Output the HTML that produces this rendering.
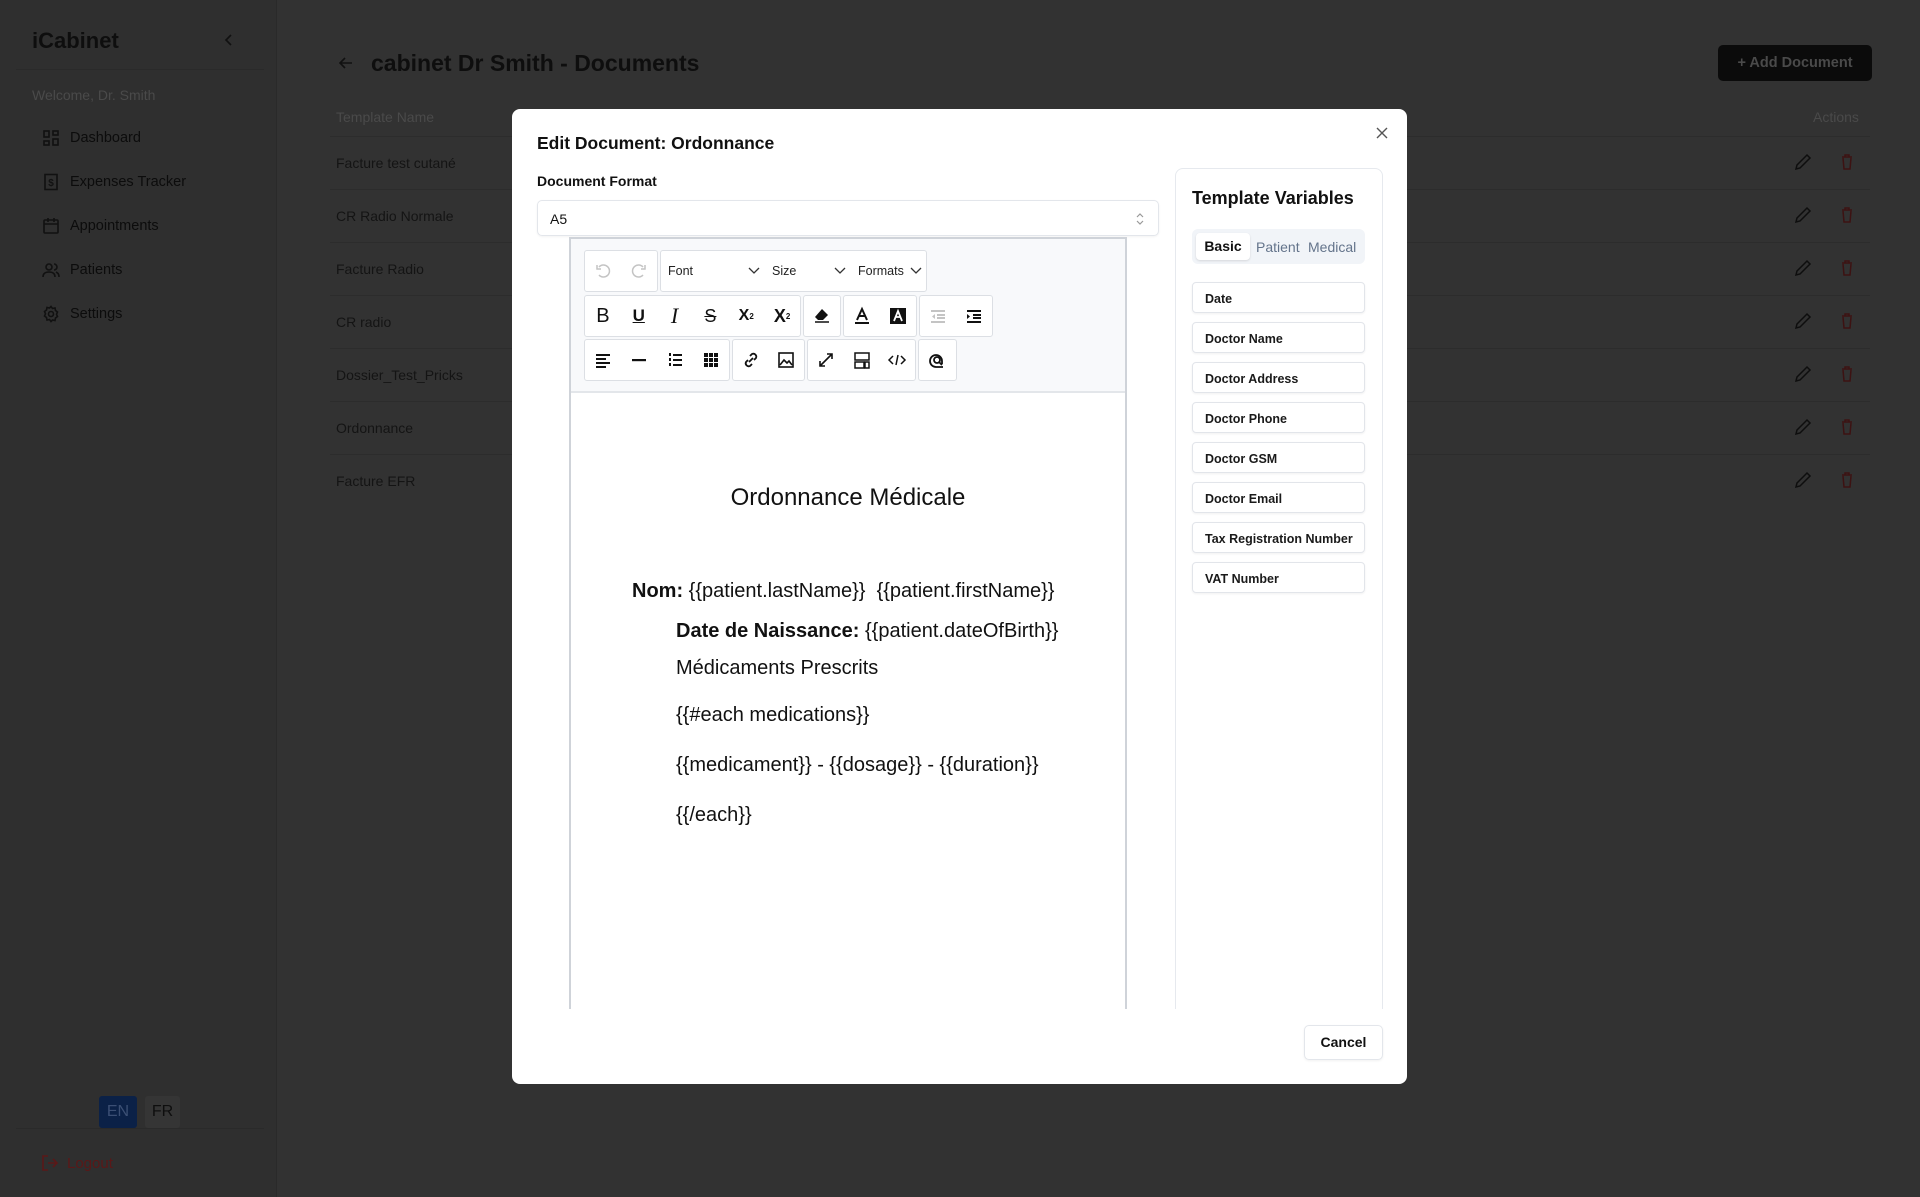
<!DOCTYPE html>
<html><head><meta charset="utf-8"><style>
*{box-sizing:border-box;margin:0;padding:0}
body{width:1920px;height:1197px;background:#323232;font-family:"Liberation Sans",sans-serif;position:relative;overflow:hidden;color:#0d0d0d}
.a{position:absolute}
.side{left:0;top:0;width:277px;height:1197px;background:#2f2f2f;border-right:1px solid #2a2a2a}
.nav{left:42px;font-size:14.5px;color:#0c0c0c;display:flex;align-items:center;gap:10px}
.nav svg{width:18px;height:18px}
.row{left:336px;font-size:14px;color:#141414}
.rl{left:330px;width:1540px;height:1px;background:#2c2c2c}
.modal{left:512px;top:109px;width:895px;height:975px;background:#fff;border-radius:8px}
.tb{background:#fff;border:1px solid #dcdfe4;border-radius:3px;height:42px;display:flex;align-items:center}
.b{width:36px;height:40px;display:flex;align-items:center;justify-content:center}
.b svg{width:20px;height:20px}
.var{left:1192px;width:173px;height:31px;border:1px solid #e2e5ea;border-radius:4px;box-shadow:0 1px 2px rgba(0,0,0,.06);font-size:12.5px;font-weight:bold;color:#1a1a1a;padding:9px 0 0 12px}
.ed{font-size:20px;color:#111}
</style></head><body>
<div class="a side"></div>
<div class="a" style="left:32px;top:28px;font-size:22px;font-weight:bold;color:#0e0e0e">iCabinet</div>
<svg class="a" style="left:223px;top:33px" width="12" height="14" viewBox="0 0 12 14"><path d="M8 2L3 7l5 5" stroke="#111" stroke-width="1.6" fill="none"/></svg>
<div class="a" style="left:16px;top:69px;width:248px;height:1px;background:#2a2a2a"></div>
<div class="a" style="left:32px;top:87px;font-size:14px;color:#4a4a4a">Welcome, Dr. Smith</div>
<div class="a nav" style="top:129px"><svg viewBox="0 0 18 18" fill="none" stroke="#111" stroke-width="1.6"><rect x="2" y="2" width="5" height="6"/><rect x="11" y="2" width="5" height="4"/><rect x="2" y="12" width="5" height="4"/><rect x="11" y="10" width="5" height="6"/></svg>Dashboard</div>
<div class="a nav" style="top:173px"><svg viewBox="0 0 18 18" fill="none" stroke="#111" stroke-width="1.6"><rect x="3" y="1.5" width="12" height="15"/><text x="9" y="13" font-size="10" text-anchor="middle" fill="#111" stroke="none" font-weight="bold">$</text></svg>Expenses Tracker</div>
<div class="a nav" style="top:217px"><svg viewBox="0 0 18 18" fill="none" stroke="#111" stroke-width="1.6"><rect x="2" y="3" width="14" height="13" rx="1"/><path d="M2 7h14M6 1v4M12 1v4"/></svg>Appointments</div>
<div class="a nav" style="top:261px"><svg viewBox="0 0 18 18" fill="none" stroke="#111" stroke-width="1.6"><circle cx="7" cy="6" r="3"/><path d="M1 16c0-4 3-5 6-5s6 1 6 5M12 3a3 3 0 010 6M14 11c2 1 3 2 3 5"/></svg>Patients</div>
<div class="a nav" style="top:305px"><svg viewBox="0 0 18 18" fill="none" stroke="#111" stroke-width="1.6"><circle cx="9" cy="9" r="2.5"/><path d="M9 1.5l1.5 2 2.5-.5.5 2.5 2 1.5-1 2.3 1 2.2-2 1.5-.5 2.5-2.5-.5L9 16.5l-1.5-2-2.5.5-.5-2.5-2-1.5 1-2.2-1-2.3 2-1.5.5-2.5 2.5.5z"/></svg>Settings</div>
<div class="a" style="left:99px;top:1096px;width:38px;height:32px;background:#0b2147;border-radius:3px;color:#3b4f74;font-size:16px;text-align:center;line-height:32px">EN</div>
<div class="a" style="left:145px;top:1096px;width:35px;height:32px;background:#353535;border-radius:3px;color:#0e0e0e;font-size:16px;text-align:center;line-height:32px">FR</div>
<div class="a" style="left:16px;top:1128px;width:248px;height:1px;background:#2a2a2a"></div>
<div class="a" style="left:41px;top:1154px;display:flex;gap:8px;align-items:center;font-size:15px;color:#5a1818"><svg width="18" height="18" viewBox="0 0 18 18" fill="none" stroke="#5a1818" stroke-width="1.6"><path d="M7 2H2v14h5M7 9h9M12 5l4 4-4 4"/></svg>Logout</div>

<svg class="a" style="left:338px;top:55px" width="16" height="16" viewBox="0 0 16 16" fill="none" stroke="#111" stroke-width="1.6"><path d="M14 8H2M7 3L2 8l5 5"/></svg>
<div class="a" style="left:371px;top:50px;font-size:23px;font-weight:bold;color:#0e0e0e">cabinet Dr Smith - Documents</div>
<div class="a" style="left:1718px;top:45px;width:154px;height:36px;background:#0b0b0b;border-radius:5px;color:#4a4a4a;font-size:14.5px;font-weight:bold;line-height:36px;text-align:center">+ Add Document</div>
<div class="a" style="left:336px;top:109px;font-size:14px;color:#4a4a4a">Template Name</div>
<div class="a" style="left:1813px;top:109px;font-size:14px;color:#4a4a4a">Actions</div>
<div class="a rl" style="top:136px"></div>
<div class="a row" style="top:155px">Facture test cutané</div>
<div class="a rl" style="top:189px"></div>
<div class="a row" style="top:208px">CR Radio Normale</div>
<div class="a rl" style="top:242px"></div>
<div class="a row" style="top:261px">Facture Radio</div>
<div class="a rl" style="top:295px"></div>
<div class="a row" style="top:314px">CR radio</div>
<div class="a rl" style="top:348px"></div>
<div class="a row" style="top:367px">Dossier_Test_Pricks</div>
<div class="a rl" style="top:401px"></div>
<div class="a row" style="top:420px">Ordonnance</div>
<div class="a rl" style="top:454px"></div>
<div class="a row" style="top:473px">Facture EFR</div>
<div class="a" style="left:1792px;top:153px;width:70px">
<svg width="70" height="350" viewBox="0 0 70 350" fill="none" stroke-width="1.5">
<g id="ic"><path d="M15 2l3 3-10 10-4 1 1-4z" stroke="#0e0e0e"/><path d="M50 4h10M53 4V2h4v2M51 5l1 11h6l1-11" stroke="#3d1212"/></g>
<use href="#ic" y="53"/><use href="#ic" y="106"/><use href="#ic" y="159"/><use href="#ic" y="212"/><use href="#ic" y="265"/><use href="#ic" y="318"/>
</svg></div>

<div class="a modal"></div>
<div class="a" style="left:537px;top:133px;font-size:17.5px;font-weight:bold;color:#111">Edit Document: Ordonnance</div>
<svg class="a" style="left:1376px;top:127px" width="12" height="12" viewBox="0 0 12 12" stroke="#555" stroke-width="1.4"><path d="M1 1l10 10M11 1L1 11"/></svg>
<div class="a" style="left:537px;top:173px;font-size:14px;font-weight:bold;color:#111">Document Format</div>
<div class="a" style="left:537px;top:200px;width:622px;height:36px;border:1px solid #e3e6eb;border-radius:5px;box-shadow:0 1px 2px rgba(0,0,0,.05);font-size:14px;padding:10px 12px;color:#111">A5
<svg class="a" style="right:14px;top:11px" width="8" height="14" viewBox="0 0 8 14" fill="none" stroke="#999" stroke-width="1.2"><path d="M1 5l3-3 3 3M1 9l3 3 3-3"/></svg></div>

<div class="a" style="left:569px;top:237px;width:558px;height:772px;border:2px solid #cfd3d9;border-bottom:none;background:#fff"></div>
<div class="a" style="left:571px;top:239px;width:554px;height:154px;background:#f8f9fb;border-bottom:2px solid #e3e6ea"></div>
<div class="a tb" style="left:584px;top:250px;width:74px"><div class="b"><svg viewBox="0 0 20 20" fill="none" stroke="#c4c4c4" stroke-width="1.5"><path d="M6 6a6 6 0 110 8"/><path d="M4 4v4h4"/></svg></div><div class="b"><svg viewBox="0 0 20 20" fill="none" stroke="#c4c4c4" stroke-width="1.5"><path d="M14 6a6 6 0 100 8"/><path d="M16 4v4h-4"/></svg></div></div>
<div class="a tb" style="left:660px;top:250px;width:267px;font-size:12.5px;color:#222">
<span style="margin-left:7px;width:80px">Font</span><svg width="12" height="8" viewBox="0 0 12 8" fill="none" stroke="#333" stroke-width="1.3"><path d="M1 1l5 5 5-5"/></svg>
<span style="margin-left:12px;width:62px">Size</span><svg width="12" height="8" viewBox="0 0 12 8" fill="none" stroke="#333" stroke-width="1.3"><path d="M1 1l5 5 5-5"/></svg>
<span style="margin-left:12px;width:52px">Formats</span><svg width="12" height="8" viewBox="0 0 12 8" fill="none" stroke="#333" stroke-width="1.3"><path d="M1 1l5 5 5-5"/></svg></div>
<div class="a tb" style="left:584px;top:295px;width:217px;font-size:20px;color:#111">
<div class="b">B</div><div class="b" style="text-decoration:underline;font-weight:bold;font-size:17px">U</div><div class="b" style="font-family:'Liberation Serif';font-style:italic;font-size:22px">I</div><div class="b" style="text-decoration:line-through;font-size:18px">S</div><div class="b" style="font-size:16px;font-weight:bold">X<sub style="font-size:8px">2</sub></div><div class="b" style="font-size:18px;font-weight:bold">X<sup style="font-size:8px">2</sup></div></div>
<div class="a tb" style="left:803px;top:295px;width:38px"><div class="b"><svg viewBox="0 0 20 20"><path d="M10 3l6 6-5 5H6L3 11z" fill="#111"/><path d="M3 16h14" stroke="#111" stroke-width="1.5"/></svg></div></div>
<div class="a tb" style="left:843px;top:295px;width:74px"><div class="b"><svg viewBox="0 0 20 20"><path d="M5 14L10 3l5 11M7 10h6" stroke="#111" stroke-width="2" fill="none"/><rect x="3" y="16" width="14" height="2" fill="#111"/></svg></div><div class="b"><svg viewBox="0 0 20 20"><rect x="2" y="2" width="16" height="16" fill="#111"/><path d="M6 15L10 5l4 10M7.5 11h5" stroke="#fff" stroke-width="1.8" fill="none"/></svg></div></div>
<div class="a tb" style="left:919px;top:295px;width:74px"><div class="b"><svg viewBox="0 0 20 20" fill="#c4c4c4"><rect x="3" y="4" width="14" height="2"/><rect x="9" y="8" width="8" height="2"/><rect x="9" y="11" width="8" height="2"/><rect x="3" y="15" width="14" height="2"/><path d="M7 8v5l-3-2.5z"/></svg></div><div class="b"><svg viewBox="0 0 20 20" fill="#111"><rect x="3" y="4" width="14" height="2"/><rect x="9" y="8" width="8" height="2"/><rect x="9" y="11" width="8" height="2"/><rect x="3" y="15" width="14" height="2"/><path d="M3 8v5l3-2.5z"/></svg></div></div>
<div class="a tb" style="left:584px;top:339px;width:146px"><div class="b"><svg viewBox="0 0 20 20" fill="#111"><rect x="3" y="4" width="14" height="2"/><rect x="3" y="8" width="10" height="2"/><rect x="3" y="12" width="14" height="2"/><rect x="3" y="16" width="10" height="2"/></svg></div><div class="b"><svg viewBox="0 0 20 20"><rect x="3" y="9" width="14" height="2.2" fill="#111"/></svg></div><div class="b"><svg viewBox="0 0 20 20" fill="#111"><rect x="8" y="4" width="9" height="2"/><rect x="8" y="9" width="9" height="2"/><rect x="8" y="14" width="9" height="2"/><rect x="4" y="3" width="2" height="3"/><rect x="4" y="8" width="2" height="3"/><rect x="4" y="13" width="2" height="3"/></svg></div><div class="b"><svg viewBox="0 0 20 20" fill="#111"><rect x="3" y="3" width="4" height="4"/><rect x="8" y="3" width="4" height="4"/><rect x="13" y="3" width="4" height="4"/><rect x="3" y="8" width="4" height="4"/><rect x="8" y="8" width="4" height="4"/><rect x="13" y="8" width="4" height="4"/><rect x="3" y="13" width="4" height="4"/><rect x="8" y="13" width="4" height="4"/><rect x="13" y="13" width="4" height="4"/></svg></div></div>
<div class="a tb" style="left:732px;top:339px;width:73px"><div class="b"><svg viewBox="0 0 20 20" fill="none" stroke="#111" stroke-width="1.8"><path d="M9 6l2-2a3 3 0 014 4l-2 2M11 14l-2 2a3 3 0 01-4-4l2-2M8 12l4-4"/></svg></div><div class="b"><svg viewBox="0 0 20 20" fill="none" stroke="#111" stroke-width="1.6"><rect x="3" y="3" width="14" height="14"/><path d="M4 15l4-5 3 3 2-2 3 4"/></svg></div></div>
<div class="a tb" style="left:807px;top:339px;width:109px"><div class="b"><svg viewBox="0 0 20 20" fill="none" stroke="#111" stroke-width="1.6"><path d="M4 16l12-12M11 4h5v5M4 11v5h5"/></svg></div><div class="b"><svg viewBox="0 0 20 20" fill="none" stroke="#111" stroke-width="1.5"><rect x="3" y="3" width="14" height="7"/><rect x="3" y="12" width="9" height="6"/><rect x="13" y="12" width="4" height="6"/></svg></div><div class="b"><svg viewBox="0 0 20 20" fill="none" stroke="#111" stroke-width="1.5"><path d="M6 6l-4 4 4 4M14 6l4 4-4 4M11 5l-2 10"/></svg></div></div>
<div class="a tb" style="left:918px;top:339px;width:39px"><div class="b"><svg viewBox="0 0 20 20" fill="none" stroke="#111" stroke-width="1.8"><path d="M16 17H9a6 6 0 116-6v3"/><circle cx="10" cy="10" r="3"/><path d="M12 12l3 3"/></svg></div></div>

<div class="a ed" style="left:571px;top:484px;width:554px;text-align:center;font-size:24px">Ordonnance Médicale</div>
<div class="a ed" style="left:632px;top:580px"><b>Nom:</b> {{patient.lastName}}&nbsp; {{patient.firstName}}</div>
<div class="a ed" style="left:676px;top:620px"><b>Date de Naissance:</b> {{patient.dateOfBirth}}</div>
<div class="a ed" style="left:676px;top:657px">Médicaments Prescrits</div>
<div class="a ed" style="left:676px;top:704px">{{#each medications}}</div>
<div class="a ed" style="left:676px;top:754px">{{medicament}} - {{dosage}} - {{duration}}</div>
<div class="a ed" style="left:676px;top:804px">{{/each}}</div>

<div class="a" style="left:1175px;top:168px;width:208px;height:841px;border:1px solid #e6e9ee;border-bottom:none;border-radius:8px 8px 0 0"></div>
<div class="a" style="left:1192px;top:188px;font-size:18px;font-weight:bold;color:#111">Template Variables</div>
<div class="a" style="left:1192px;top:229px;width:173px;height:35px;background:#f1f4f8;border-radius:6px"></div>
<div class="a" style="left:1196px;top:233px;width:54px;height:27px;background:#fff;border-radius:4px;box-shadow:0 1px 2px rgba(0,0,0,.12);font-size:14px;font-weight:bold;color:#111;text-align:center;line-height:27px">Basic</div>
<div class="a" style="left:1256px;top:239px;font-size:14px;color:#64748b">Patient</div>
<div class="a" style="left:1308px;top:239px;font-size:14px;color:#64748b">Medical</div>
<div class="a var" style="top:282px">Date</div>
<div class="a var" style="top:322px">Doctor Name</div>
<div class="a var" style="top:362px">Doctor Address</div>
<div class="a var" style="top:402px">Doctor Phone</div>
<div class="a var" style="top:442px">Doctor GSM</div>
<div class="a var" style="top:482px">Doctor Email</div>
<div class="a var" style="top:522px">Tax Registration Number</div>
<div class="a var" style="top:562px">VAT Number</div>
<div class="a" style="left:1304px;top:1025px;width:79px;height:35px;border:1px solid #e3e6eb;border-radius:5px;box-shadow:0 1px 2px rgba(0,0,0,.06);font-size:14px;font-weight:bold;color:#111;text-align:center;line-height:33px">Cancel</div>
</body></html>
